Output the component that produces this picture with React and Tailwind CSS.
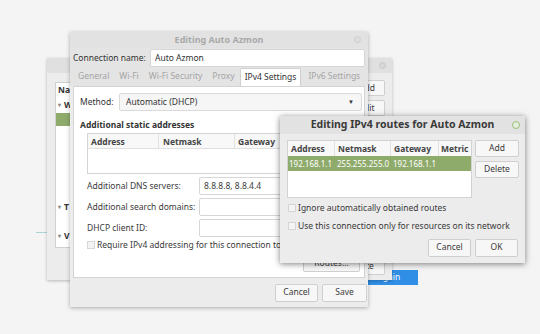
import React from "react";

const font = { fontFamily: '"Noto Sans", "Open Sans", sans-serif' };

function Btn({ children, className = "" }) {
  return (
    <div
      className={
        "flex items-center justify-center rounded-[2px] border border-[#cfcfcf] bg-[#f7f7f7] text-[8.5px] text-[#3a3a3a] " +
        className
      }
    >
      {children}
    </div>
  );
}

function Check({ label, className = "" }) {
  return (
    <div className={"flex items-center gap-[2px] " + className}>
      <div className="h-[8px] w-[8px] border border-[#d6d6d6] bg-[#f4f4f4]" />
      <span className="text-[8.5px] text-[#3a3a3a]">{label}</span>
    </div>
  );
}

function BackWindow() {
  return (
    <div className="absolute left-[47px] top-[58px] flex h-[222px] w-[345px] flex-col bg-[#ececec] shadow-[0_1px_3px_rgba(0,0,0,0.25)]">
      <div className="flex h-[15px] items-center justify-end bg-[#e0e0e0] pr-[6px]">
        <div className="h-[7px] w-[7px] rounded-full border border-[#c8c8c8] bg-[#d8d8d8]" />
      </div>
      <div className="relative flex-1">
        <div className="absolute left-[8px] top-[9px] h-[166px] w-[290px] border border-[#d0d0d0] bg-white">
          <div className="h-[14px] pl-[2px] text-[8.5px] font-bold leading-[14px] text-[#333]">Name</div>
          <div className="flex h-[16px] items-center pl-[2px] text-[8.5px] font-bold text-[#333]">
            <span className="mr-[3px] text-[6px] text-[#888]">▾</span>W
          </div>
          <div className="h-[13px] bg-[#8fab6c]" />
          <div className="mt-[73px] flex h-[16px] items-center pl-[2px] text-[8.5px] font-bold text-[#333]">
            <span className="mr-[3px] text-[6px] text-[#888]">▾</span>T
          </div>
          <div className="mt-[13px] flex h-[16px] items-center pl-[2px] text-[8.5px] font-bold text-[#333]">
            <span className="mr-[3px] text-[6px] text-[#888]">▾</span>V
          </div>
        </div>
        <Btn className="absolute left-[302px] top-[7px] h-[16px] w-[36px]">Add</Btn>
        <Btn className="absolute left-[302px] top-[27px] h-[16px] w-[36px]">Edit</Btn>
        <Btn className="absolute left-[290px] top-[185px] h-[17px] w-[48px]">Delete</Btn>
      </div>
    </div>
  );
}

function MainWindow() {
  const tabs = ["General", "Wi-Fi", "Wi-Fi Security", "Proxy"];
  return (
    <div className="absolute left-[70px] top-[32px] flex h-[275px] w-[298px] flex-col bg-[#ececec] shadow-[0_1px_4px_rgba(0,0,0,0.3)]">
      <div className="relative flex h-[16px] items-center justify-center bg-[#e2e2e2]">
        <span className="text-[9px] font-bold text-[#a9a9a9]">Editing Auto Azmon</span>
        <div className="absolute right-[7px] top-[4px] h-[7px] w-[7px] rounded-full border border-[#cfcfcf] bg-[#dcdcdc]" />
      </div>
      <div className="flex h-[20px] items-center bg-[#e4e4e4] pl-[3px] pr-[3px]">
        <span className="w-[77px] text-[8.5px] text-[#333]">Connection name:</span>
        <div className="flex h-[18px] flex-1 items-center rounded-[2px] border border-[#d6d6d6] bg-white pl-[4px] text-[8.5px] text-[#333]">
          Auto Azmon
        </div>
      </div>
      <div className="flex h-[18px] items-end bg-[#e4e4e4] pl-[8px]">
        {tabs.map((t) => (
          <span key={t} className="mb-[3px] mr-[10px] text-[8.5px] text-[#a4a4a4]">
            {t}
          </span>
        ))}
        <div className="ml-[-5px] flex h-[18px] items-center rounded-t-[2px] border border-b-0 border-[#d0d0d0] bg-white px-[4px] text-[8.5px] text-[#333]">
          IPv4 Settings
        </div>
        <span className="mb-[3px] ml-[7px] text-[8.5px] text-[#a4a4a4]">IPv6 Settings</span>
      </div>
      <div className="relative mx-[3px] h-[192px] border border-[#d4d4d4] bg-white">
        <div className="absolute left-[6px] top-[6px] flex w-[282px] items-center">
          <span className="w-[39px] text-[8.5px] text-[#333]">Method:</span>
          <div className="flex h-[18px] flex-1 items-center justify-between rounded-[2px] border border-[#dadada] bg-[#f6f6f6] pl-[6px] pr-[7px] text-[8.5px] text-[#333]">
            <span>Automatic (DHCP)</span>
            <span className="text-[6px]">▼</span>
          </div>
        </div>
        <div className="absolute left-[6px] top-[32px] text-[8.5px] font-bold text-[#333]">
          Additional static addresses
        </div>
        <div className="absolute left-[13px] top-[46px] h-[41px] w-[220px] border border-[#d4d4d4] bg-white">
          <div className="flex h-[15px] border-b border-[#e0e0e0] bg-[#f8f8f8] text-[8.5px] font-bold text-[#444]">
            <div className="w-[71px] border-r border-[#e2e2e2] pl-[3px] leading-[15px]">Address</div>
            <div className="w-[76px] border-r border-[#e2e2e2] pl-[4px] leading-[15px]">Netmask</div>
            <div className="flex-1 pl-[3px] leading-[15px]">Gateway</div>
          </div>
        </div>
        <div className="absolute left-[13px] top-[90px] flex w-[280px] flex-col gap-[3px] text-[8.5px] text-[#3a3a3a]">
          <div className="flex items-center">
            <span className="w-[112px]">Additional DNS servers:</span>
            <div className="flex h-[18px] flex-1 items-center rounded-[2px] border border-[#d6d6d6] pl-[4px]">
              8.8.8.8, 8.8.4.4
            </div>
          </div>
          <div className="flex items-center">
            <span className="w-[112px]">Additional search domains:</span>
            <div className="h-[18px] flex-1 rounded-[2px] border border-[#d6d6d6]" />
          </div>
          <div className="flex items-center">
            <span className="w-[112px]">DHCP client ID:</span>
            <div className="h-[18px] flex-1 rounded-[2px] border border-[#d6d6d6]" />
          </div>
        </div>
        <Check
          label="Require IPv4 addressing for this connection to complete"
          className="absolute left-[13px] top-[152px]"
        />
        <Btn className="absolute left-[229px] top-[168px] h-[17px] w-[57px]">Routes…</Btn>
      </div>
      <div className="flex flex-1 items-center justify-end gap-[4px] pr-[1px]">
        <Btn className="h-[18px] w-[43px]">Cancel</Btn>
        <Btn className="h-[18px] w-[45px]">Save</Btn>
      </div>
    </div>
  );
}

function RoutesDialog() {
  return (
    <div className="absolute left-[280px] top-[116px] flex h-[147px] w-[245px] flex-col bg-[#ececec] shadow-[0_1px_6px_rgba(0,0,0,0.5)]">
      <div className="relative flex h-[18px] items-center justify-center bg-[#e2e2e2]">
        <span className="text-[10.5px] font-bold text-[#3a3a3a]">Editing IPv4 routes for Auto Azmon</span>
        <div className="absolute right-[5px] top-[5px] h-[8px] w-[8px] rounded-full border-[1.5px] border-[#9bbf7a] bg-[#e4eedb]" />
      </div>
      <div className="flex gap-[3px] pl-[7px] pt-[6px]">
        <div className="h-[58px] w-[185px] border border-[#d2d2d2] bg-white">
          <div className="flex h-[15px] bg-[#f8f8f8] text-[8.5px] font-bold text-[#444]">
            <div className="w-[47px] border-r border-[#e2e2e2] pl-[3px] leading-[15px]">Address</div>
            <div className="w-[56px] border-r border-[#e2e2e2] pl-[3px] leading-[15px]">Netmask</div>
            <div className="w-[48px] border-r border-[#e2e2e2] pl-[3px] leading-[15px]">Gateway</div>
            <div className="flex-1 pl-[2px] leading-[15px]">Metric</div>
          </div>
          <div className="flex h-[15px] bg-[#8fab6c] text-[8px] leading-[15px] text-white">
            <div className="w-[47px] overflow-hidden whitespace-nowrap pl-[1px]">192.168.1.1</div>
            <div className="w-[56px] overflow-hidden whitespace-nowrap pl-[2px]">255.255.255.0</div>
            <div className="w-[48px] pl-[2px]">192.168.1.1</div>
          </div>
        </div>
        <div className="flex flex-col gap-[4px]">
          <Btn className="h-[17px] w-[44px]">Add</Btn>
          <Btn className="h-[17px] w-[44px]">Delete</Btn>
        </div>
      </div>
      <div className="mt-[4px] flex flex-col gap-[5px] pl-[8px]">
        <Check label="Ignore automatically obtained routes" />
        <Check label="Use this connection only for resources on its network" />
      </div>
      <div className="mt-[6px] flex justify-end gap-[4px] pr-[7px]">
        <Btn className="h-[18px] w-[43px]">Cancel</Btn>
        <Btn className="h-[18px] w-[43px]">OK</Btn>
      </div>
    </div>
  );
}

export default function App() {
  return (
    <div className="relative h-[334px] w-[540px] overflow-hidden bg-[#f4f4f4]" style={font}>
      <div className="absolute left-[36px] top-[232px] h-[1px] w-[12px] bg-[#a9d4d4]" />
      <div className="absolute left-[367px] top-[270px] flex h-[15px] w-[51px] items-center bg-[#2f8fe6] pl-[11px] text-[8.5px] text-white">
        again
      </div>
      <BackWindow />
      <MainWindow />
      <RoutesDialog />
    </div>
  );
}
